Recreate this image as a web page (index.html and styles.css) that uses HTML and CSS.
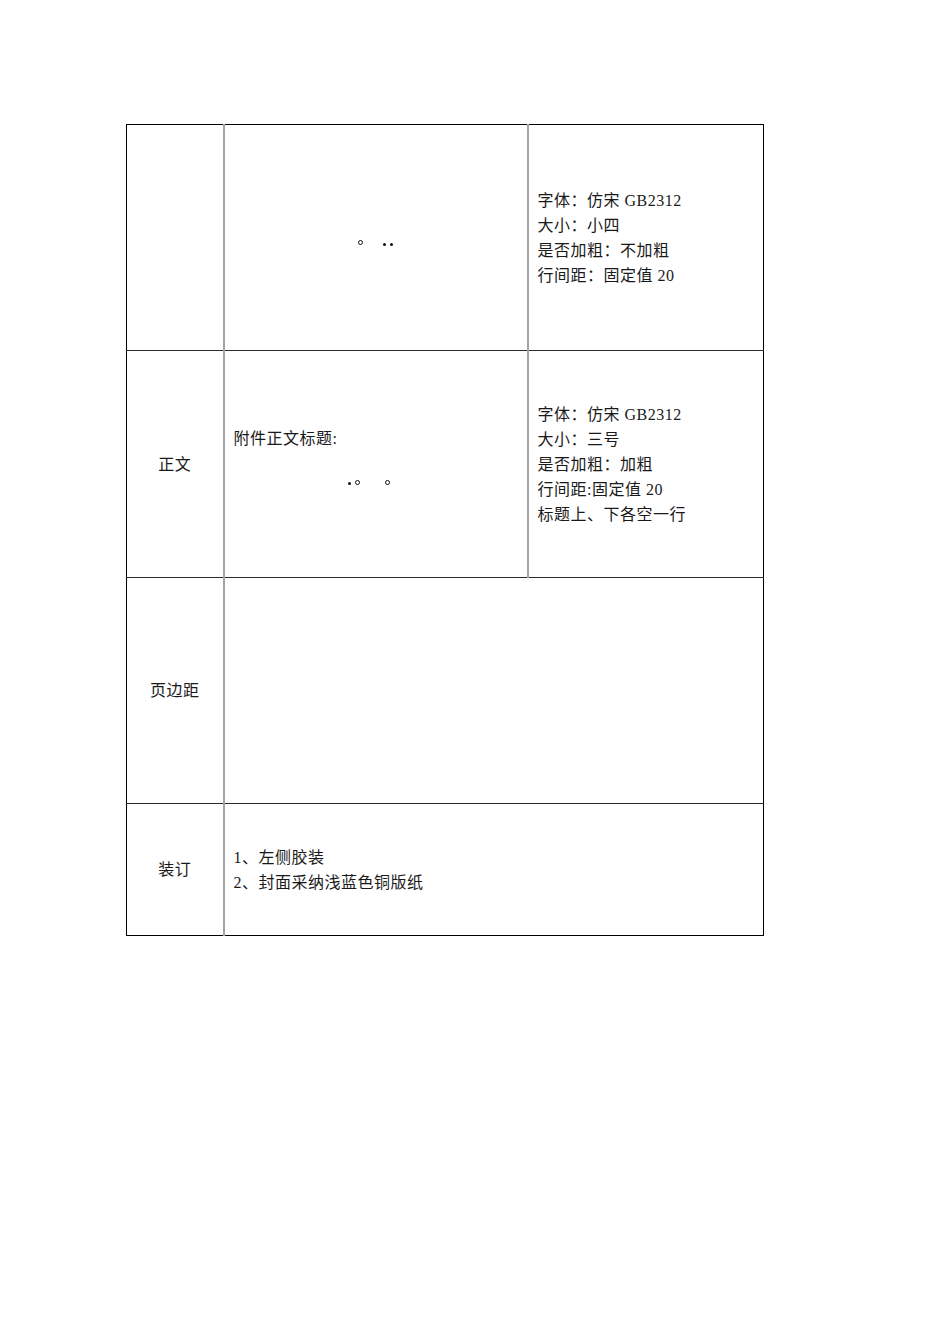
FILE: index.html
```html
<!DOCTYPE html>
<html lang="zh-CN">
<head>
<meta charset="utf-8">
<title>附件格式要求</title>
<link rel="stylesheet" href="styles.css">
</head>
<body>
<table class="spec">
  <colgroup>
    <col class="c1">
    <col class="c2">
    <col class="c3">
  </colgroup>
  <tr class="r1">
    <td class="label"></td>
    <td class="sample">
      <div class="marks marks-a"><span class="ring"></span><span class="gap"></span><span class="dot"></span><span class="dot"></span></div>
    </td>
    <td class="desc">
      <div>字体：仿宋 GB2312</div>
      <div>大小：小四</div>
      <div>是否加粗：不加粗</div>
      <div>行间距：固定值 20</div>
    </td>
  </tr>
  <tr class="r2">
    <td class="label">正文</td>
    <td class="sample">
      <div class="title-line">附件正文标题:</div>
      <div class="marks marks-b"><span class="dot"></span><span class="ring"></span><span class="gap2"></span><span class="ring"></span></div>
    </td>
    <td class="desc">
      <div>字体：仿宋 GB2312</div>
      <div>大小：三号</div>
      <div>是否加粗：加粗</div>
      <div>行间距:固定值 20</div>
      <div>标题上、下各空一行</div>
    </td>
  </tr>
  <tr class="r3">
    <td class="label">页边距</td>
    <td class="wide" colspan="2"></td>
  </tr>
  <tr class="r4">
    <td class="label">装订</td>
    <td class="wide" colspan="2">
      <div>1、左侧胶装</div>
      <div>2、封面采纳浅蓝色铜版纸</div>
    </td>
  </tr>
</table>
</body>
</html>
```
FILE: styles.css
```css
html, body {
  margin: 0;
  padding: 0;
  background: #ffffff;
}

body {
  font-family: "Liberation Serif", "Noto Sans CJK SC", serif;
  font-size: 16px;
  line-height: 25px;
  letter-spacing: 0.5px;
  color: #1a1a1a;
}

.spec {
  border-collapse: collapse;
  table-layout: fixed;
  width: 637px;
  margin: 124px 0 0 126px;
  border: 1px solid #000;
}

.c1 { width: 97px; }
.c2 { width: 304px; }
.c3 { width: 236px; }

.spec td {
  padding: 0 9px;
  vertical-align: middle;
  border-top: 1px solid #2b2b2b;
  border-bottom: 1px solid #2b2b2b;
  border-left: 2px solid #a3a3a3;
  border-right: 2px solid #a3a3a3;
}

.spec td.label {
  border-left: 1px solid #000;
  text-align: center;
}

.spec td.desc,
.spec td.wide {
  border-right: 1px solid #000;
}

.spec tr.r1 td { border-top: 1px solid #000; height: 225px; }
.spec tr.r2 td { height: 226px; }
.spec tr.r3 td { height: 225px; }
.spec tr.r4 td { border-bottom: 1px solid #000; height: 131px; }

.marks {
  display: flex;
  justify-content: center;
  align-items: center;
  gap: 4px;
  height: 8px;
}

.marks-a {
  margin-top: 10px;
}

.marks-b {
  margin-top: 27px;
  margin-bottom: 16px;
  margin-right: 14px;
}

.ring {
  width: 5px;
  height: 5px;
  border: 1px solid #111;
  border-radius: 50%;
  box-sizing: border-box;
}

.dot {
  width: 3px;
  height: 3px;
  background: #111;
  border-radius: 50%;
  align-self: flex-end;
  margin-bottom: 1px;
}

.gap { width: 12px; }
.gap2 { width: 17px; }
```
